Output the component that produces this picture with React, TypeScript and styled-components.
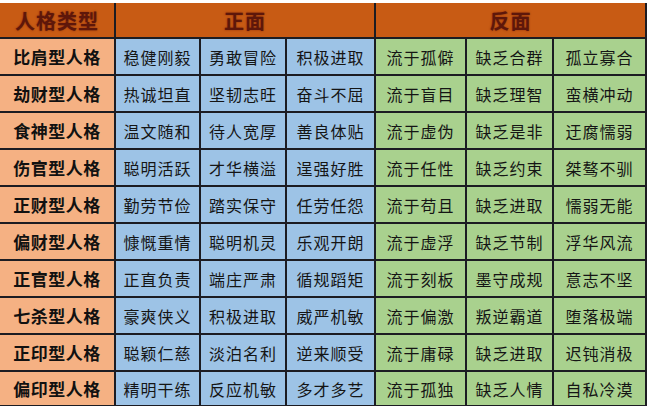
import React from "react"
import styled, { createGlobalStyle } from "styled-components"

const GlobalStyle = createGlobalStyle`
  html, body {
    margin: 0;
    padding: 0;
    background: #ffffff;
  }
  body {
    font-family: "Noto Sans CJK SC", "Noto Sans", sans-serif;
  }
`

type Row = { type: string; good: string[]; bad: string[] }

const rows: Row[] = [
  { type: "比肩型人格", good: ["稳健刚毅", "勇敢冒险", "积极进取"], bad: ["流于孤僻", "缺乏合群", "孤立寡合"] },
  { type: "劫财型人格", good: ["热诚坦直", "坚韧志旺", "奋斗不屈"], bad: ["流于盲目", "缺乏理智", "蛮横冲动"] },
  { type: "食神型人格", good: ["温文随和", "待人宽厚", "善良体贴"], bad: ["流于虚伪", "缺乏是非", "迂腐懦弱"] },
  { type: "伤官型人格", good: ["聪明活跃", "才华横溢", "逞强好胜"], bad: ["流于任性", "缺乏约束", "桀骜不驯"] },
  { type: "正财型人格", good: ["勤劳节俭", "踏实保守", "任劳任怨"], bad: ["流于苟且", "缺乏进取", "懦弱无能"] },
  { type: "偏财型人格", good: ["慷慨重情", "聪明机灵", "乐观开朗"], bad: ["流于虚浮", "缺乏节制", "浮华风流"] },
  { type: "正官型人格", good: ["正直负责", "端庄严肃", "循规蹈矩"], bad: ["流于刻板", "墨守成规", "意志不坚"] },
  { type: "七杀型人格", good: ["豪爽侠义", "积极进取", "威严机敏"], bad: ["流于偏激", "叛逆霸道", "堕落极端"] },
  { type: "正印型人格", good: ["聪颖仁慈", "淡泊名利", "逆来顺受"], bad: ["流于庸碌", "缺乏进取", "迟钝消极"] },
  { type: "偏印型人格", good: ["精明干练", "反应机敏", "多才多艺"], bad: ["流于孤独", "缺乏人情", "自私冷漠"] },
]

const App = () => {
  return (
    <Page>
      <GlobalStyle />
      <Grid>
        <HeadCell>人格类型</HeadCell>
        <HeadCell span={3}>正面</HeadCell>
        <HeadCell span={3}>反面</HeadCell>
        {rows.map((r) => (
          <React.Fragment key={r.type}>
            <TypeCell>{r.type}</TypeCell>
            {r.good.map((t, i) => (
              <Cell key={"g" + i} tone="blue">{t}</Cell>
            ))}
            {r.bad.map((t, i) => (
              <Cell key={"b" + i} tone="green">{t}</Cell>
            ))}
          </React.Fragment>
        ))}
      </Grid>
    </Page>
  )
}

const Page = styled.div`
  width: 649px;
  height: 413px;
  padding-top: 3px;
  box-sizing: border-box;
  overflow: hidden;
  background: #fff;
`

const Grid = styled.div`
  display: grid;
  grid-template-columns: 114px 83px 84px 87px 89px 85px 91px;
  grid-template-rows: 34px repeat(9, 35px) 33px;
  gap: 2px;
  width: 647px;
  padding: 0 2px 1px 0;
  box-sizing: border-box;
  background: #1c1c22;
`

const HeadCell = styled.div<{ span?: number }>`
  grid-column: span ${({ span }) => span || 1};
  display: flex;
  align-items: center;
  justify-content: center;
  background: #c85b14;
  color: #5e170a;
  font-size: 20px;
  font-weight: 700;
  letter-spacing: 1px;
  text-shadow: 0 0 2px rgba(110, 25, 8, 0.7);
`

const TypeCell = styled.div`
  display: flex;
  align-items: center;
  justify-content: center;
  background: #f5b183;
  color: #111;
  font-size: 17px;
  font-weight: 700;
  letter-spacing: 0.5px;
`

const Cell = styled.div<{ tone: "blue" | "green" }>`
  display: flex;
  align-items: center;
  justify-content: center;
  background: ${({ tone }) => (tone === "blue" ? "#9dc3e6" : "#a9d18e")};
  color: #151515;
  font-size: 16px;
  letter-spacing: 1px;
`

export default App
